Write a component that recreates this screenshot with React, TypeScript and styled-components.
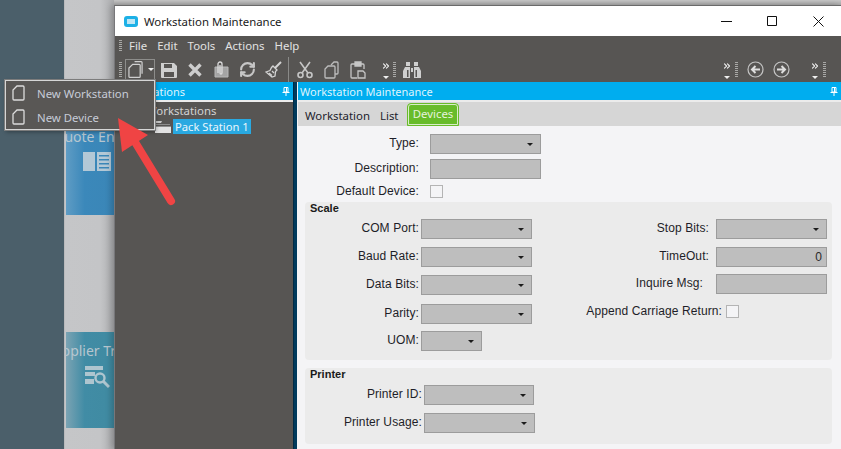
import React from 'react'
import styled, { createGlobalStyle } from 'styled-components'
import { ChevronsRight, RefreshCw } from 'lucide-react'

const GlobalStyle = createGlobalStyle`
  html, body { margin: 0; padding: 0; height: 100%; overflow: hidden; }
  body { font-family: "Noto Sans", "Liberation Sans", sans-serif; font-size: 11.4px; }
  * { box-sizing: border-box; }
`

const Page = styled.div`
  position: relative;
  display: flex;
  width: 841px;
  height: 449px;
  overflow: hidden;
  background: #4b5f6a;
`
const Rail = styled.div`
  width: 64px;
  flex: none;
`
const Desktop = styled.div`
  width: 51px;
  flex: none;
  overflow: hidden;
  display: flex;
  flex-direction: column;
  gap: 117px;
  padding: 119px 0 0 1px;
  background: linear-gradient(90deg, #c5c6c8 0, #c4c5c7 70%, #a9aaac 100%);
  border-left: 1px solid #b9babc;
`
const Tile = styled.div<{ $bg: string }>`
  width: 62px;
  height: 96px;
  flex: none;
  background: ${({ $bg }) => $bg};
  color: #b7c6cf;
  display: flex;
  flex-direction: column;
  align-items: center;
`
const TileName = styled.div<{ $shift: number; $top: number }>`
  font-size: 14px;
  line-height: 18px;
  white-space: nowrap;
  margin-top: ${({ $top }) => $top}px;
  margin-left: ${({ $shift }) => $shift}px;
`
const TileIcon = styled.svg`
  margin-top: 6px;
  flex: none;
`

const Window = styled.div`
  position: absolute;
  left: 114px;
  top: 5px;
  width: 727px;
  height: 444px;
  display: flex;
  flex-direction: column;
  background: #575553;
  border-top: 1px solid #6a6a6a;
  border-left: 1px solid #77777a;
  box-shadow: -3px 0 6px rgba(0, 0, 0, 0.2);
`
const Strip = styled.div`
  position: absolute;
  left: 114px;
  top: 0;
  width: 727px;
  height: 5px;
  background: linear-gradient(#c6c6c6, #a8a8a8);
`
const TitleBar = styled.div`
  height: 30px;
  flex: none;
  background: #fff;
  display: flex;
  align-items: center;
  padding-left: 9px;
  color: #1a1a1a;
`
const AppIcon = styled.span`
  width: 14px;
  height: 11px;
  border: 3px solid #1cb0e6;
  border-radius: 3px;
  background: #bfe6f5;
  margin-right: 6px;
`
const TitleText = styled.span`
  flex: 1;
`
const WinButton = styled.span`
  width: 46px;
  height: 30px;
  display: flex;
  align-items: center;
  justify-content: center;
`
const MenuRow = styled.div`
  height: 21px;
  flex: none;
  display: flex;
  align-items: center;
  padding: 0 0 2px 4px;
  color: #e2e2e2;
`
const Grip = styled.span<{ $h: number }>`
  width: 3px;
  height: ${({ $h }) => $h}px;
  flex: none;
  background: repeating-linear-gradient(#a8a8a6 0 1px, transparent 1px 2px);
`
const MenuItems = styled.div`
  display: flex;
  gap: 10px;
  margin-left: 7px;
`
const ToolBar = styled.div`
  height: 25px;
  flex: none;
  display: flex;
  align-items: center;
  padding-left: 4px;
  color: #c6c6c6;
`
const DropButton = styled.span`
  width: 30px;
  height: 22px;
  margin-left: 3px;
  border: 1px solid #8d8d8b;
  display: flex;
  align-items: center;
  padding-left: 2px;
  gap: 5px;
`
const Caret = styled.span`
  width: 0;
  height: 0;
  border: 3px solid transparent;
  border-top: 3px solid #efefef;
  border-bottom: 0;
  flex: none;
`
const ToolIcon = styled.span<{ $left: number }>`
  display: flex;
  margin-left: ${({ $left }) => $left}px;
  flex: none;
`
const ToolSep = styled.span<{ $left: number }>`
  width: 1px;
  height: 25px;
  background: #8a8a88;
  margin-left: ${({ $left }) => $left}px;
  flex: none;
`
const More = styled.span<{ $left: number }>`
  width: 8px;
  height: 22px;
  margin-left: ${({ $left }) => $left}px;
  display: flex;
  flex-direction: column;
  align-items: center;
  justify-content: space-between;
  padding: 2px 0 2px;
  color: #f0f0f0;
  flex: none;
`

const Dock = styled.div`
  flex: 1;
  display: flex;
  min-height: 0;
`
const LeftPanel = styled.div`
  width: 178px;
  flex: none;
  display: flex;
  flex-direction: column;
`
const Splitter = styled.div`
  width: 5px;
  flex: none;
  background: linear-gradient(90deg, #002a44 0 1px, #003a5c 1px 4px, #f4f4f6 4px);
`
const RightPanel = styled.div`
  flex: 1;
  display: flex;
  flex-direction: column;
  background: #f4f4f6;
`
const PanelHead = styled.div`
  height: 18px;
  flex: none;
  background: #00adef;
  color: #dff4fd;
  display: flex;
  align-items: center;
  justify-content: space-between;
  padding: 0 3px 0 2px;
  font-size: 11px;
  white-space: nowrap;
`
const HeadGap = styled.div`
  height: 2px;
  flex: none;
  background: #ececec;
`
const Tree = styled.div`
  color: #d2d2d2;
  padding: 1px 0 0 31px;
`
const TreeChild = styled.div`
  display: flex;
  align-items: center;
  gap: 2px;
  margin: 1px 0 0 9px;
`
const Selected = styled.span`
  background: #29a9e1;
  color: #e9f6fc;
  padding: 0 2px;
  line-height: 15px;
  height: 15px;
  font-size: 11.2px;
  white-space: nowrap;
`
const Tabs = styled.div`
  height: 24px;
  flex: none;
  background: #d6d6d6;
  display: flex;
  align-items: center;
  padding: 2px 0 0 7px;
  color: #22222c;
`
const Tab = styled.span<{ $active?: boolean; $w: number }>`
  width: ${({ $w }) => $w}px;
  white-space: nowrap;
  ${({ $active }) =>
    $active &&
    `height: 23px;
     align-self: flex-end;
     background: #68bc2a;
     color: #e6f2dc;
     border: 1px solid #68bc2a;
     outline: 1px solid #d9edc9;
     outline-offset: -2px;
     border-radius: 4px 4px 0 0;
     text-align: center;
     line-height: 20px;`}
`
const Form = styled.div`
  flex: 1;
  padding: 8px 9px 0 7px;
  color: #1e1e28;
  font-size: 12px;
  font-family: "Liberation Sans", Arial, sans-serif;
  letter-spacing: 0.1px;
`
const Stack = styled.div<{ $gap: number }>`
  display: flex;
  flex-direction: column;
  gap: ${({ $gap }) => $gap}px;
`
const Field = styled.div<{ $label: number; $gap: number; $mt?: number }>`
  display: grid;
  grid-template-columns: ${({ $label }) => $label}px auto;
  column-gap: ${({ $gap }) => $gap}px;
  align-items: center;
  justify-content: start;
  margin-top: ${({ $mt }) => $mt ?? 0}px;
`
const Label = styled.label<{ $pad?: number }>`
  text-align: right;
  white-space: nowrap;
  line-height: 13px;
  margin-top: -1px;
  padding-right: ${({ $pad }) => $pad ?? 0}px;
`
const Control = styled.div<{ $w: number }>`
  width: ${({ $w }) => $w}px;
  height: 20px;
  background: #bebebe;
  border: 1px solid #9c9c9c;
  display: flex;
  align-items: center;
  justify-content: flex-end;
  padding-right: 4px;
  color: #2a2a2a;
`
const SelectCaret = styled.span`
  width: 0;
  height: 0;
  border: 3px solid transparent;
  border-top: 3px solid #1c1c1c;
  border-bottom: 0;
  margin-right: 3px;
`
const Check = styled.span`
  width: 13px;
  height: 13px;
  background: #f4f4f6;
  border: 1px solid #b4b4b4;
  display: block;
`
const Group = styled.section<{ $h: number; $mt: number }>`
  height: ${({ $h }) => $h}px;
  margin-top: ${({ $mt }) => $mt}px;
  background: #ebebeb;
  border-radius: 4px;
`
const GroupTitle = styled.h4`
  margin: 0;
  height: 17px;
  padding-left: 5px;
  font-size: 11px;
  line-height: 13px;
  font-weight: 700;
  letter-spacing: 0;
  color: #1a1a1a;
`
const Columns = styled.div`
  display: flex;
  justify-content: space-between;
  padding-right: 5px;
`

const Menu = styled.div`
  position: absolute;
  left: 5px;
  top: 80px;
  width: 150px;
  height: 50px;
  background: #595755;
  border: 1px solid #d6d6d6;
  outline: 1px solid #7c7c7c;
  box-shadow: 1px 2px 4px rgba(0, 0, 0, 0.35);
`
const MenuEntry = styled.div`
  height: 24px;
  display: flex;
  align-items: center;
  gap: 12px;
  padding-left: 6px;
  color: #c7ccd8;
`
const Arrow = styled.svg`
  position: absolute;
  left: 110px;
  top: 110px;
`

const DocIcon = ({ size = 13 }: { size?: number }) => (
  <svg width={size} height={size + 3} viewBox="0 0 13 16" fill="none" stroke="#dcdcdc" strokeWidth="1.3">
    <path d="M5 1h6a1 1 0 0 1 1 1v12a1 1 0 0 1-1 1H2a1 1 0 0 1-1-1V5z" />
  </svg>
)

const NewIcon = () => (
  <svg width="16" height="19" viewBox="0 0 16 19" fill="none" stroke="#d0d0d0" strokeWidth="1.3">
    <path d="M7 1h7a1 1 0 0 1 1 1v12" />
    <path d="M5 4h7a1 1 0 0 1 1 1v12a1 1 0 0 1-1 1H2a1 1 0 0 1-1-1V8z" />
  </svg>
)

const SaveIcon = () => (
  <svg width="16" height="16" viewBox="0 0 16 16" fill="#cfcfcf">
    <path fillRule="evenodd" d="M0 1h13l3 3v11a1 1 0 0 1-1 1H1a1 1 0 0 1-1-1zM3 2v4h8V2zM3 10v5h10v-5z" />
  </svg>
)

const CrossIcon = () => (
  <svg width="14" height="14" viewBox="0 0 14 14" stroke="#cdcdcd" strokeWidth="3.4">
    <path d="M1.5 1.5l11 11M12.5 1.5l-11 11" />
  </svg>
)

const ClipTrashIcon = () => (
  <svg width="15" height="17" viewBox="0 0 15 17" fill="none" stroke="#b8b8b8">
    <path d="M1 6h13v10H1z" fill="#a4a4a4" />
    <path d="M4 12V3a2 2 0 0 1 4 0v9a1 1 0 0 1-2 0V4" stroke="#dcdcdc" strokeWidth="1.3" />
  </svg>
)

const BroomIcon = () => (
  <svg width="17" height="17" viewBox="0 0 17 17" fill="none" stroke="#d4d4d4" strokeWidth="1.3">
    <path d="M16 1l-6 6" strokeWidth="2" />
    <path d="M8 5l4 4-1.500 1.500L10 15l-3 1-6-5 4-1.500L6.500 6.500z" />
    <path d="M4 12l3 2.500M7 10l2 2" />
  </svg>
)

const ScissorsIcon = () => (
  <svg width="16" height="18" viewBox="0 0 16 18" fill="none" stroke="#c6c6c6" strokeWidth="1.6">
    <circle cx="3.500" cy="14" r="2.500" />
    <circle cx="12.500" cy="14" r="2.500" />
    <path d="M5 12L13 1M11 12L3 1" />
  </svg>
)

const CopyIcon = () => (
  <svg width="15" height="18" viewBox="0 0 15 18" fill="none" stroke="#bdbdbd" strokeWidth="1.3">
    <path d="M7 4l3-3h3a1 1 0 0 1 1 1v10a1 1 0 0 1-1 1h-2" />
    <path d="M4 5h6a1 1 0 0 1 1 1v10a1 1 0 0 1-1 1H2a1 1 0 0 1-1-1V8z" />
  </svg>
)

const PasteIcon = () => (
  <svg width="16" height="18" viewBox="0 0 16 18" fill="none" stroke="#c6c6c6" strokeWidth="1.3">
    <path d="M6 3H2a1 1 0 0 0-1 1v12a1 1 0 0 0 1 1h5M11 3h2a1 1 0 0 1 1 1v4" />
    <path d="M5 1h6v4H5z" fill="#c6c6c6" />
    <path d="M8 10h5l2 2v5H8z" />
  </svg>
)

const BinocularsIcon = () => (
  <svg width="18" height="16" viewBox="0 0 18 16" fill="#cfcfcf">
    <path d="M3 0h4v4H3zM11 0h4v4h-4z" />
    <path d="M2 5h5v11H0V9zM11 5h5l2 4v7h-7zM8 6h2v4H8z" />
    <path d="M4 8h1.500v7H4zM12.500 8H14v7h-1.500z" fill="#575553" />
  </svg>
)

const CircleArrow = ({ dir }: { dir: 'l' | 'r' }) => (
  <svg width="17" height="17" viewBox="0 0 17 17" fill="none" stroke="#c4c4c4">
    <circle cx="8.500" cy="8.500" r="7.500" strokeWidth="1.200" />
    <path
      d={dir === 'l' ? 'M13 8.500H5M8.500 5l-3.500 3.500L8.500 12' : 'M4 8.500h8M8.500 5l3.500 3.500L8.500 12'}
      strokeWidth="2"
      stroke="#dedede"
    />
  </svg>
)

const Pin = () => (
  <svg width="8" height="9" viewBox="0 0 8 9" fill="none" stroke="#fff" strokeWidth="1">
    <path d="M2 .5h4v4.500H2zM.5 5.500h7M4 5.500V9M4.500 1v4" />
  </svg>
)

const Folder = () => (
  <svg width="16" height="12" viewBox="0 0 16 12" fill="none">
    <path d="M0 2h6l1-2h-6z" fill="#c9c9c9" />
    <path d="M0 3h15v1H0zM0 5h16v1H0z" fill="#8d8d8d" />
    <path d="M0 6h16v6H0z" fill="#e2e2e2" />
  </svg>
)

const Overflow = ({ left }: { left: number }) => (
  <More $left={left}>
    <ChevronsRight size={10} strokeWidth={2.6} />
    <Caret />
  </More>
)

const Select = ({ w }: { w: number }) => (
  <Control $w={w}>
    <SelectCaret />
  </Control>
)

const App = () => (
  <Page>
    <GlobalStyle />
    <Rail />
    <Desktop>
      <Tile $bg="linear-gradient(90deg, #5f9cc4 0, #3b88ba 30%, #3a85b6 100%)">
        <TileName $shift={-8} $top={9}>Quote Entry</TileName>
        <TileIcon width="28" height="19" viewBox="0 0 28 19" fill="#b3c8d6">
          <path fillRule="evenodd" d="M0 0h12v19H0zM14 0h14v19H14zM16 3v1.500h10V3zM16 7v1.500h10V7zM16 11v1.500h10V11zM16 15v1.500h10V15z" />
        </TileIcon>
      </Tile>
      <Tile $bg="linear-gradient(90deg, #7ba3b3 0, #418ca5 30%, #3f8aa0 100%)">
        <TileName $shift={10} $top={10}>Supplier Tracking</TileName>
        <TileIcon width="25" height="23" viewBox="0 0 25 23" fill="#aec5cf">
          <path d="M0 0h18v4H0zM0 6h10v4H0zM0 13h9v5H0z" />
          <circle cx="15" cy="12" r="4.500" fill="none" stroke="#aec5cf" strokeWidth="2.400" />
          <path d="M18 15l6 6" stroke="#aec5cf" strokeWidth="3" />
        </TileIcon>
      </Tile>
    </Desktop>
    <Strip />
    <Window>
      <TitleBar>
        <AppIcon />
        <TitleText>Workstation Maintenance</TitleText>
        <WinButton>
          <svg width="11" height="1"><path d="M0 .5h11" stroke="#111" /></svg>
        </WinButton>
        <WinButton>
          <svg width="10" height="10" fill="none"><path d="M.5.5h9v9h-9z" stroke="#111" /></svg>
        </WinButton>
        <WinButton>
          <svg width="11" height="11" fill="none"><path d="M.5.5l10 10M10.500.5l-10 10" stroke="#111" /></svg>
        </WinButton>
      </TitleBar>
      <MenuRow>
        <Grip $h={12} />
        <MenuItems>
          <span>File</span>
          <span>Edit</span>
          <span>Tools</span>
          <span>Actions</span>
          <span>Help</span>
        </MenuItems>
      </MenuRow>
      <ToolBar>
        <Grip $h={16} />
        <DropButton>
          <NewIcon />
          <Caret />
        </DropButton>
        <ToolIcon $left={6}><SaveIcon /></ToolIcon>
        <ToolIcon $left={11}><CrossIcon /></ToolIcon>
        <ToolIcon $left={12}><ClipTrashIcon /></ToolIcon>
        <ToolIcon $left={10}><RefreshCw size={17} strokeWidth={3} /></ToolIcon>
        <ToolIcon $left={9}><BroomIcon /></ToolIcon>
        <ToolSep $left={6} />
        <ToolIcon $left={8}><ScissorsIcon /></ToolIcon>
        <ToolIcon $left={11}><CopyIcon /></ToolIcon>
        <ToolIcon $left={11}><PasteIcon /></ToolIcon>
        <Overflow left={16} />
        <ToolIcon $left={3}><Grip $h={16} /></ToolIcon>
        <ToolIcon $left={7}><BinocularsIcon /></ToolIcon>
        <Overflow left={302} />
        <ToolIcon $left={4}><Grip $h={16} /></ToolIcon>
        <ToolIcon $left={9}><CircleArrow dir="l" /></ToolIcon>
        <ToolIcon $left={9}><CircleArrow dir="r" /></ToolIcon>
        <Overflow left={21} />
        <ToolIcon $left={4}><Grip $h={16} /></ToolIcon>
      </ToolBar>
      <Dock>
        <LeftPanel>
          <PanelHead>
            <span>Workstations</span>
            <Pin />
          </PanelHead>
          <HeadGap />
          <Tree>
            <div>Workstations</div>
            <TreeChild>
              <Folder />
              <Selected>Pack Station 1</Selected>
            </TreeChild>
          </Tree>
        </LeftPanel>
        <Splitter />
        <RightPanel>
          <PanelHead>
            <span>Workstation Maintenance</span>
            <Pin />
          </PanelHead>
          <HeadGap />
          <Tabs>
            <Tab $w={75}>Workstation</Tab>
            <Tab $w={27}>List</Tab>
            <Tab $w={52} $active>Devices</Tab>
          </Tabs>
          <Form>
            <Stack $gap={5}>
              <Field $label={114} $gap={11}><Label>Type:</Label><Select w={111} /></Field>
              <Field $label={114} $gap={11}><Label>Description:</Label><Control $w={111} /></Field>
              <Field $label={114} $gap={11} $mt={1}><Label>Default Device:</Label><Check /></Field>
            </Stack>
            <Group $h={158} $mt={4}>
              <GroupTitle>Scale</GroupTitle>
              <Columns>
                <Stack $gap={8}>
                  <Field $label={114} $gap={2}><Label>COM Port:</Label><Select w={111} /></Field>
                  <Field $label={114} $gap={2}><Label>Baud Rate:</Label><Select w={111} /></Field>
                  <Field $label={114} $gap={2}><Label>Data Bits:</Label><Select w={111} /></Field>
                  <Field $label={114} $gap={2} $mt={1}><Label>Parity:</Label><Select w={111} /></Field>
                  <Field $label={114} $gap={2} $mt={-1}><Label>UOM:</Label><Select w={61} /></Field>
                </Stack>
                <Stack $gap={8}>
                  <Field $label={129} $gap={7}><Label>Stop Bits:</Label><Select w={111} /></Field>
                  <Field $label={129} $gap={7}><Label>TimeOut:</Label><Control $w={111}>0</Control></Field>
                  <Field $label={129} $gap={7} $mt={-1}><Label $pad={6}>Inquire Msg:</Label><Control $w={111} /></Field>
                  <Field $label={142} $gap={4} $mt={3}><Label>Append Carriage Return:</Label><Check /></Field>
                </Stack>
              </Columns>
            </Group>
            <Group $h={76} $mt={8}>
              <GroupTitle>Printer</GroupTitle>
              <Stack $gap={8}>
                <Field $label={117} $gap={2}><Label>Printer ID:</Label><Select w={110} /></Field>
                <Field $label={117} $gap={2}><Label>Printer Usage:</Label><Select w={111} /></Field>
              </Stack>
            </Group>
          </Form>
        </RightPanel>
      </Dock>
    </Window>
    <Menu>
      <MenuEntry><DocIcon />New Workstation</MenuEntry>
      <MenuEntry><DocIcon />New Device</MenuEntry>
    </Menu>
    <Arrow width="70" height="100" viewBox="0 0 70 100">
      <path d="M25 32L61 91" stroke="#f04444" strokeWidth="8" strokeLinecap="round" />
      <path d="M8 8L38 25L12 42z" fill="#f04444" />
    </Arrow>
  </Page>
)

export default App
